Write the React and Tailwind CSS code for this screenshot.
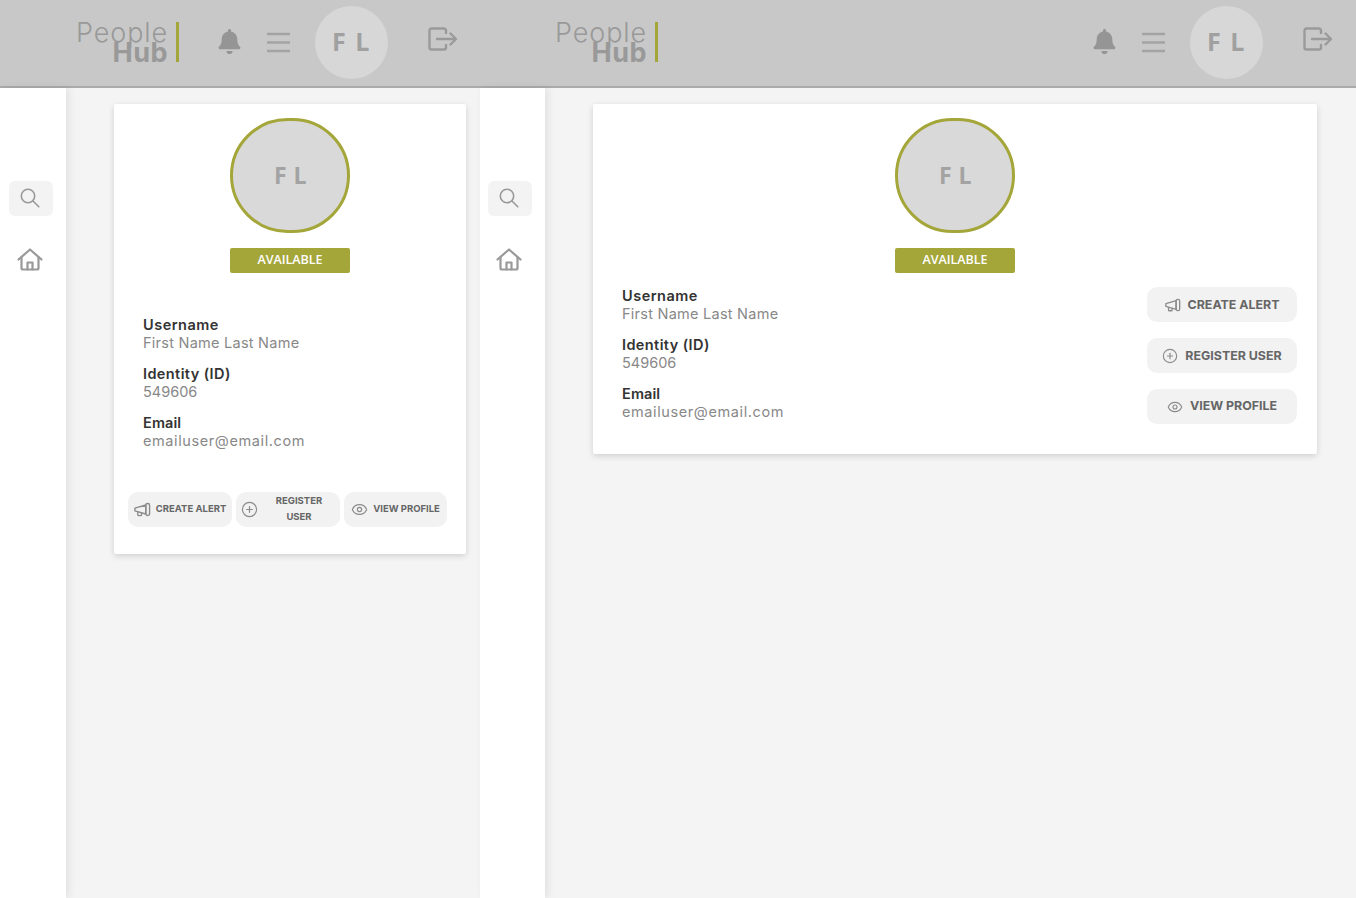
import { CirclePlus, Eye } from 'lucide-react';
import { FaBell } from 'react-icons/fa';

const font = "font-['Inter','Liberation_Sans',sans-serif]";

// open box with an arrow going out on the right
function LogoutIcon() {
  return (
    <svg width="30" height="24" viewBox="0 0 30 24" fill="none" stroke="#9a9a9a" strokeWidth="2.4" strokeLinecap="round" strokeLinejoin="round">
      <path d="M18 6V3.500a2 2 0 0 0-2-2H3.500a2 2 0 0 0-2 2v17a2 2 0 0 0 2 2H16a2 2 0 0 0 2-2V18" />
      <path d="M9 12h18" />
      <path d="M22.500 6.500 28 12l-5.500 5.500" />
    </svg>
  );
}

function SearchIcon() {
  return (
    <svg width="20" height="20" viewBox="0 0 20 20" fill="none" stroke="#999999" strokeWidth="1.6" strokeLinecap="round">
      <circle cx="8" cy="8" r="6.700" />
      <path d="M13 13l5.800 5.800" />
    </svg>
  );
}

function HomeIcon() {
  return (
    <svg width="26" height="23" viewBox="0 0 26 23" fill="none" stroke="#999999" strokeWidth="2.200" strokeLinecap="round" strokeLinejoin="round">
      <path d="M1.500 11.500 13 1.500l11.500 10" />
      <path d="M4.500 9.500V20a1.500 1.500 0 0 0 1.500 1.500h14a1.500 1.500 0 0 0 1.500-1.500V9.500" />
      <path d="M10.500 21.500v-7h5v7" />
    </svg>
  );
}

function MenuIcon() {
  return (
    <svg width="23" height="21" viewBox="0 0 23 21" fill="none" stroke="#a3a3a3" strokeWidth="2.600">
      <path d="M0 2h23M0 10.500h23M0 19h23" />
    </svg>
  );
}

function MegaphoneIcon({ className, size }) {
  return (
    <svg className={className} width={size} height={size} viewBox="0 0 18 18" fill="none" stroke="currentColor" strokeWidth="1.500" strokeLinejoin="round">
      <path d="M1 7.500 12.500 4.200v9.600L1 10.500z" />
      <rect x="12.500" y="2.700" width="4" height="12.600" rx="1.800" />
      <path d="M4 11.500v3a1 1 0 0 0 1 1h2a1 1 0 0 0 1-1v-2" />
    </svg>
  );
}

function Header({ wide }) {
  return (
    <header className={`flex h-[88px] items-center justify-between border-b-2 border-[#ababab] bg-[#c8c8c8] pb-[2px] ${wide ? 'pl-[75px] pr-[23px]' : 'pl-[76px] pr-[22px]'} ${font}`}>
      <div className="flex h-[40px] items-center">
        <div className="flex flex-col items-end text-[#999999]">
          <span className="text-[27px] font-light leading-[24px] tracking-[0.9px]">People</span>
          <span className="-mt-[3px] text-[27px] font-bold leading-[22px] tracking-[0.5px]">Hub</span>
        </div>
        <div className="ml-[8px] h-[40px] w-[3px] bg-[#a4a639]" />
      </div>
      <div className="flex items-center">
        <FaBell className="-translate-y-px text-[#959595]" size={25} />
        <div className="ml-[25px]">
          <MenuIcon />
        </div>
        <div className="ml-[25px] flex h-[73px] w-[73px] items-center justify-center rounded-full bg-[#d7d7d7] font-['Open_Sans',sans-serif] text-[25px] font-bold tracking-[1.5px] text-[#a0a0a0]">
          F L
        </div>
        <div className="ml-[40px] -translate-y-[3px]">
          <LogoutIcon />
        </div>
      </div>
    </header>
  );
}

function Sidebar({ wide }) {
  return (
    <aside className={`relative z-10 flex shrink-0 flex-col items-start bg-white pt-[93px] shadow-[3px_0_8px_rgba(0,0,0,0.08)] ${wide ? 'w-[65px] pl-[8px]' : 'w-[66px] pl-[9px]'}`}>
      <div className="flex h-[35px] w-[44px] items-center justify-center rounded-[6px] bg-[#f3f3f3] pr-[2px] pb-[1px]">
        <SearchIcon />
      </div>
      <div className="ml-[8px] mt-[32px]">
        <HomeIcon />
      </div>
    </aside>
  );
}

function Field({ label, value, labelClass, valueClass }) {
  return (
    <div>
      <div className={`text-[14.5px] font-semibold leading-[18px] text-[#333333] ${labelClass}`}>{label}</div>
      <div className={`text-[14.5px] font-normal leading-[18px] text-[#888888] ${valueClass}`}>{value}</div>
    </div>
  );
}

function Details() {
  return (
    <div className="flex flex-col gap-[13px]">
      <Field label="Username" value="First Name Last Name" labelClass="tracking-[0.5px]" valueClass="tracking-[0.25px]" />
      <Field label="Identity (ID)" value="549606" labelClass="tracking-[0.4px]" valueClass="" />
      <Field label="Email" value="emailuser@email.com" labelClass="tracking-[0.1px]" valueClass="tracking-[0.6px]" />
    </div>
  );
}

function ActionButton({ icon: Icon, label, small, width, labelClass = '' }) {
  return (
    <button
      className={`flex h-[35px] items-center justify-center rounded-[10px] bg-[#f2f2f2] font-bold text-[#666666] ${small ? 'gap-[5px] text-[9.5px]' : 'gap-[7px] text-[12.4px]'} ${width}`}
    >
      <Icon className="shrink-0 text-[#8c8c8c]" size={small ? 17 : 16} strokeWidth={1.7} />
      <span className={`${small ? 'leading-[16px] -translate-y-px' : ''} ${labelClass}`}>{label}</span>
    </button>
  );
}

function Profile() {
  return (
    <div className="flex flex-col items-center">
      <div className="flex h-[115px] w-[120px] items-center justify-center rounded-full border-[3px] border-[#a4a639] bg-[#d9d9d9] pl-[1px] font-['Open_Sans',sans-serif] text-[23px] font-bold tracking-[0.5px] text-[#a3a3a3]">
        F L
      </div>
      <div className="mt-[15px] flex h-[25px] w-[120px] items-center justify-center rounded-[2px] bg-[#a4a639] pb-[1px] font-['Open_Sans',sans-serif] text-[12.5px] font-semibold text-white">
        AVAILABLE
      </div>
    </div>
  );
}

export default function App() {
  return (
    <div className={`flex h-[898px] w-[1356px] overflow-hidden bg-[#f4f4f4] ${font}`}>
      {/* narrow version */}
      <div className="flex w-[480px] shrink-0 flex-col">
        <Header />
        <div className="flex flex-1">
          <Sidebar />
          <main className="flex-1 bg-[#f4f4f4] pl-[48px] pr-[14px] pt-[16px]">
            <div className="h-[450px] rounded-[2px] bg-white pt-[14px] shadow-[0_2px_6px_rgba(0,0,0,0.15)]">
              <Profile />
              <div className="ml-[29px] mt-[43px]">
                <Details />
              </div>
              <div className="ml-[14px] mt-[42px] flex gap-[4px]">
                <ActionButton small icon={MegaphoneIcon} label="CREATE ALERT" width="w-[104px]" />
                <ActionButton small icon={CirclePlus} label="REGISTER USER" width="w-[104px]" labelClass="w-[72px] text-center" />
                <ActionButton small icon={Eye} label="VIEW PROFILE" width="w-[103px]" />
              </div>
            </div>
          </main>
        </div>
      </div>
      {/* wide version */}
      <div className="flex flex-1 flex-col">
        <Header wide />
        <div className="flex flex-1">
          <Sidebar wide />
          <main className="flex-1 bg-[#f4f4f4] pl-[48px] pr-[39px] pt-[16px]">
            <div className="h-[350px] rounded-[2px] bg-white pt-[14px] shadow-[0_2px_6px_rgba(0,0,0,0.15)]">
              <Profile />
              <div className="mt-[14px] flex items-start justify-between pl-[29px] pr-[20px]">
                <Details />
                <div className="flex flex-col gap-[16px]">
                  <ActionButton icon={MegaphoneIcon} label="CREATE ALERT" width="w-[150px]" labelClass="translate-y-px" />
                  <ActionButton icon={CirclePlus} label="REGISTER USER" width="w-[150px]" labelClass="translate-y-px" />
                  <ActionButton icon={Eye} label="VIEW PROFILE" width="w-[150px]" />
                </div>
              </div>
            </div>
          </main>
        </div>
      </div>
    </div>
  );
}
